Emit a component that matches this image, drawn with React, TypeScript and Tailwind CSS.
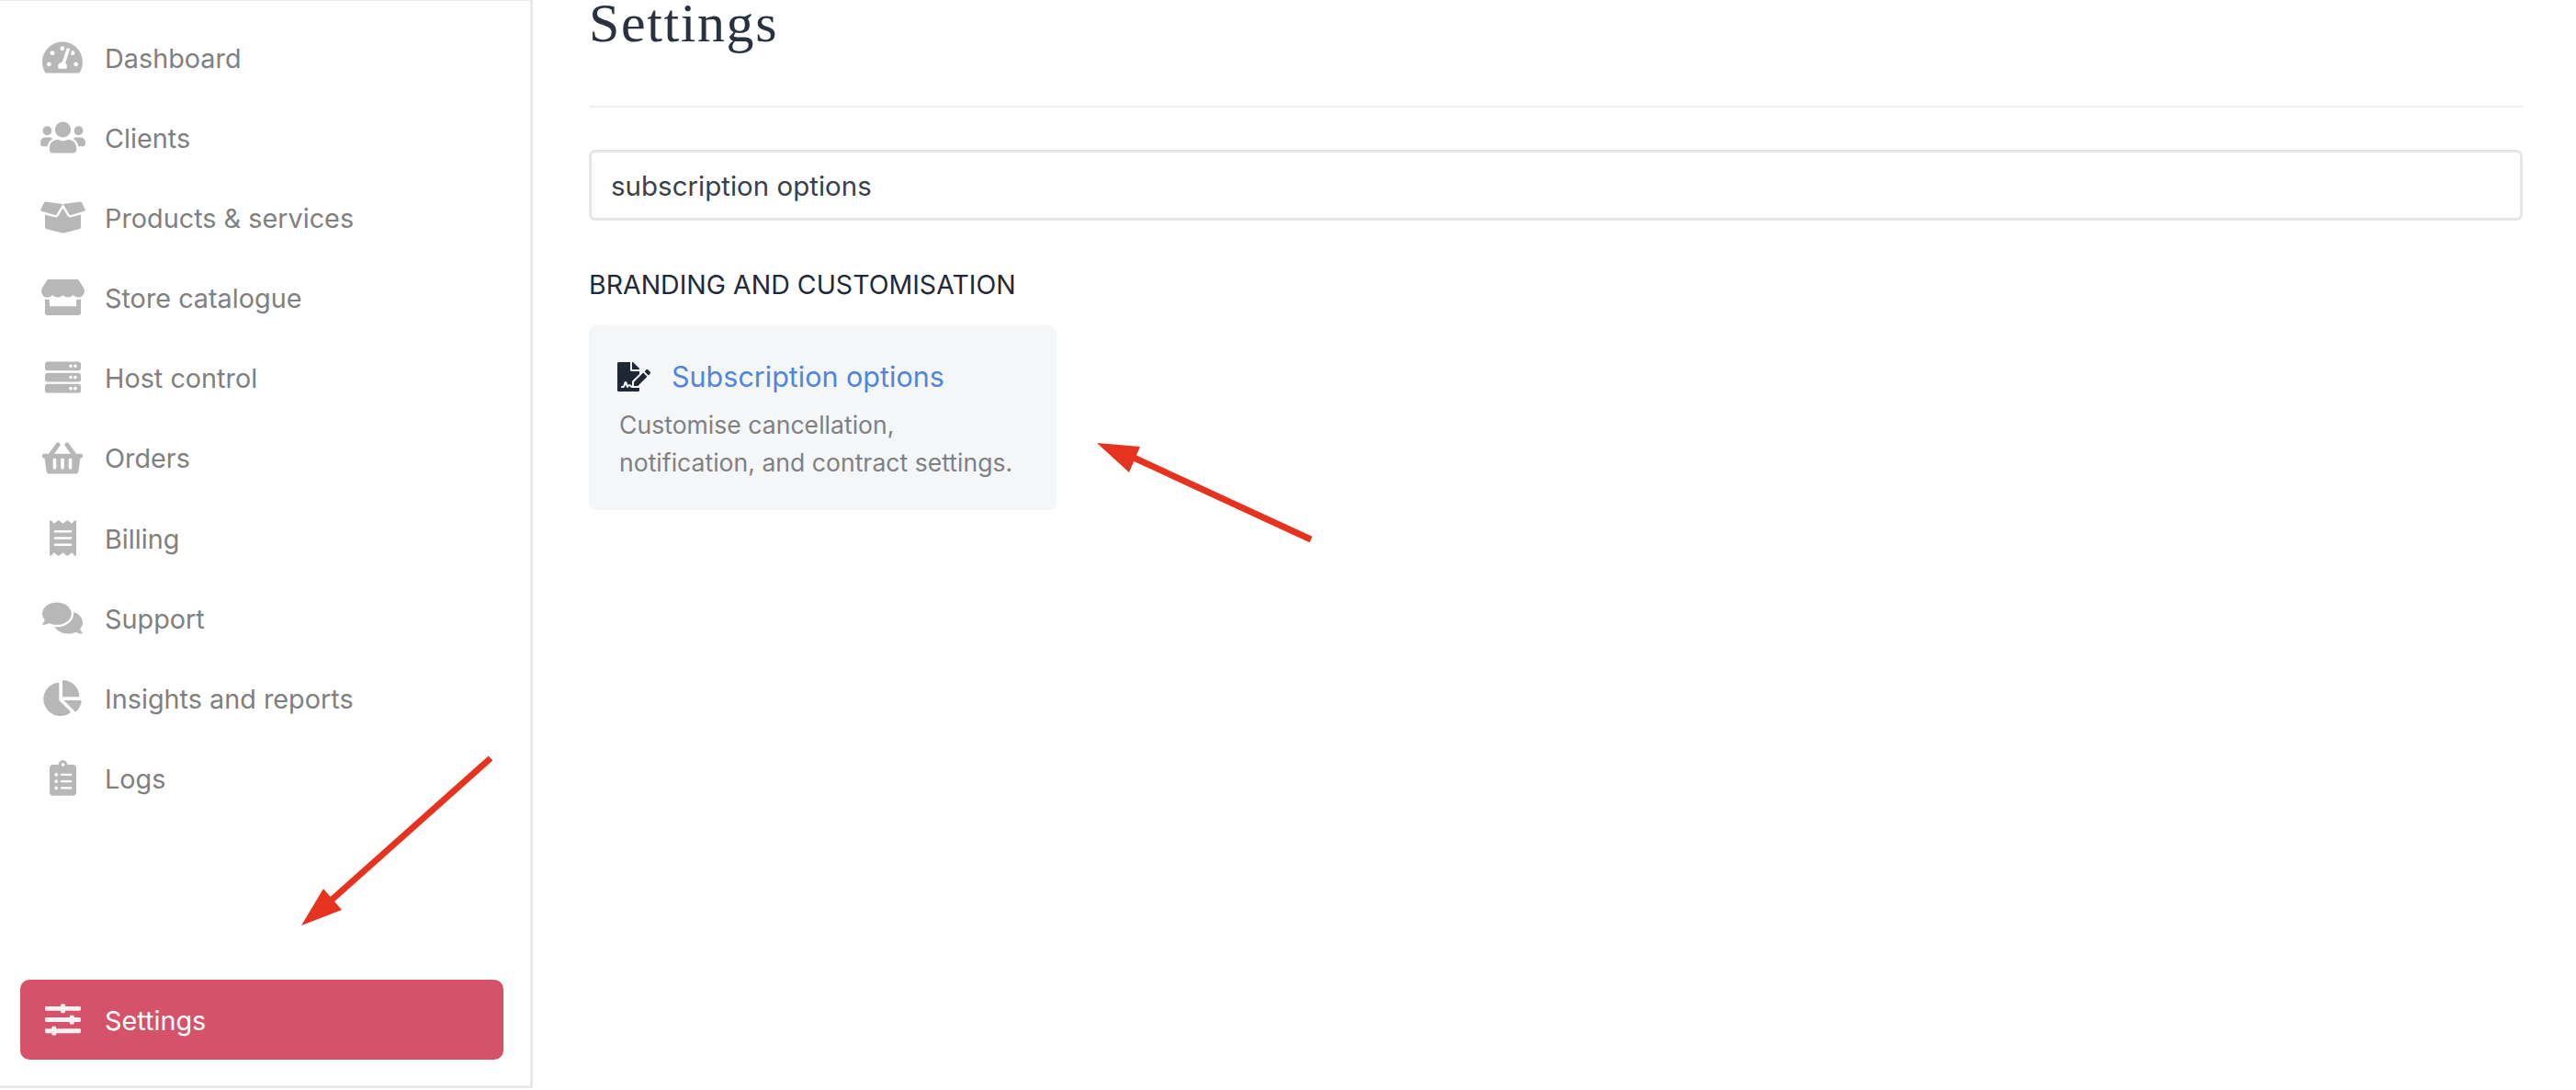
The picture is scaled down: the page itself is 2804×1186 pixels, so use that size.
import type { IconType } from "react-icons";
import {
  FaBoxOpen,
  FaChartPie,
  FaClipboardList,
  FaComments,
  FaFileSignature,
  FaReceipt,
  FaServer,
  FaShoppingBasket,
  FaSlidersH,
  FaStore,
  FaTachometerAlt,
  FaUsers,
} from "react-icons/fa";

const navItems: { label: string; icon: IconType; size: string }[] = [
  { label: "Dashboard", icon: FaTachometerAlt, size: "w-[44px]" },
  { label: "Clients", icon: FaUsers, size: "w-[49px]" },
  { label: "Products & services", icon: FaBoxOpen, size: "w-[49px]" },
  { label: "Store catalogue", icon: FaStore, size: "w-[47px]" },
  { label: "Host control", icon: FaServer, size: "w-[39px]" },
  { label: "Orders", icon: FaShoppingBasket, size: "w-[44px]" },
  { label: "Billing", icon: FaReceipt, size: "w-[29px]" },
  { label: "Support", icon: FaComments, size: "w-[44px]" },
  { label: "Insights and reports", icon: FaChartPie, size: "w-[42px]" },
  { label: "Logs", icon: FaClipboardList, size: "w-[29px]" },
];

function Sidebar() {
  return (
    <aside className="flex h-[1184px] w-[580px] shrink-0 flex-col justify-between border-r-[3px] border-b-[3px] border-t border-[#e9e9e9] pt-[18px] pb-[28px]">
      <nav>
        {navItems.map((item) => (
          <a key={item.label} className="flex h-[87.1px] items-center pl-[43px] text-[28.8px] text-[#808080]">
            <span className="flex w-[50px] shrink-0 justify-center">
              <item.icon className={`h-[39px] text-[#b7b7b7] ${item.size}`} />
            </span>
            <span className="ml-[21px] pt-[2px]">{item.label}</span>
          </a>
        ))}
      </nav>
      <a className="ml-[22px] flex h-[87px] w-[526px] items-center rounded-[10px] bg-[#d5526a] pl-[21px] text-[28.8px] text-white">
        <span className="flex w-[50px] shrink-0 justify-center">
          <FaSlidersH className="h-[39px] w-[39px] text-[#fdf0f2]" />
        </span>
        <span className="ml-[21px] pt-[2px]">Settings</span>
      </a>
    </aside>
  );
}

function Arrows() {
  return (
    <svg className="pointer-events-none absolute left-0 top-0" width="2804" height="1186" viewBox="0 0 2804 1186">
      <g fill="#e5331f" stroke="none">
        <line x1="534" y1="825" x2="360" y2="980" stroke="#e5331f" strokeWidth="7" />
        <polygon points="328,1007 352,967 372,990" />
        <line x1="1427" y1="587" x2="1232" y2="497" stroke="#e5331f" strokeWidth="7" />
        <polygon points="1194,482 1241,486 1229,514" />
      </g>
    </svg>
  );
}

export default function App() {
  return (
    <div className="relative flex h-[1186px] w-[2804px] overflow-hidden bg-white font-['Inter',sans-serif]">
      <Sidebar />
      <main className="flex-1 pl-[61px] pr-[58px]">
        <h1 className="h-[117px] border-b-2 border-[#efefef] font-['Liberation_Serif',serif] text-[60px] leading-[50px] tracking-[1.6px] text-[#2a3240]">
          Settings
        </h1>
        <input
          defaultValue="subscription options"
          className="mt-[46px] h-[77px] w-full rounded-[7px] border-[3px] border-[#e6e6e6] px-[21px] text-[29.5px] text-[#3b4048] outline-none"
        />
        <h2 className="mt-[53px] text-[28.5px] leading-[34px] text-[#1f2937]">BRANDING AND CUSTOMISATION</h2>
        <div className="mt-[27px] h-[201px] w-[509px] rounded-[9px] bg-[#f5f6f8] pl-[33px] pt-[37px]">
          <div className="flex items-center">
            <FaFileSignature className="-ml-[2px] h-[32px] w-[36px] text-[#1f2735]" />
            <span className="ml-[23px] text-[30.5px] leading-[38px] text-[#4f86dc]">Subscription options</span>
          </div>
          <p className="mt-[13px] text-[26.6px] leading-[40.5px] text-[#808080]">
            Customise cancellation,
            <br />
            notification, and contract settings.
          </p>
        </div>
      </main>
      <Arrows />
    </div>
  );
}
